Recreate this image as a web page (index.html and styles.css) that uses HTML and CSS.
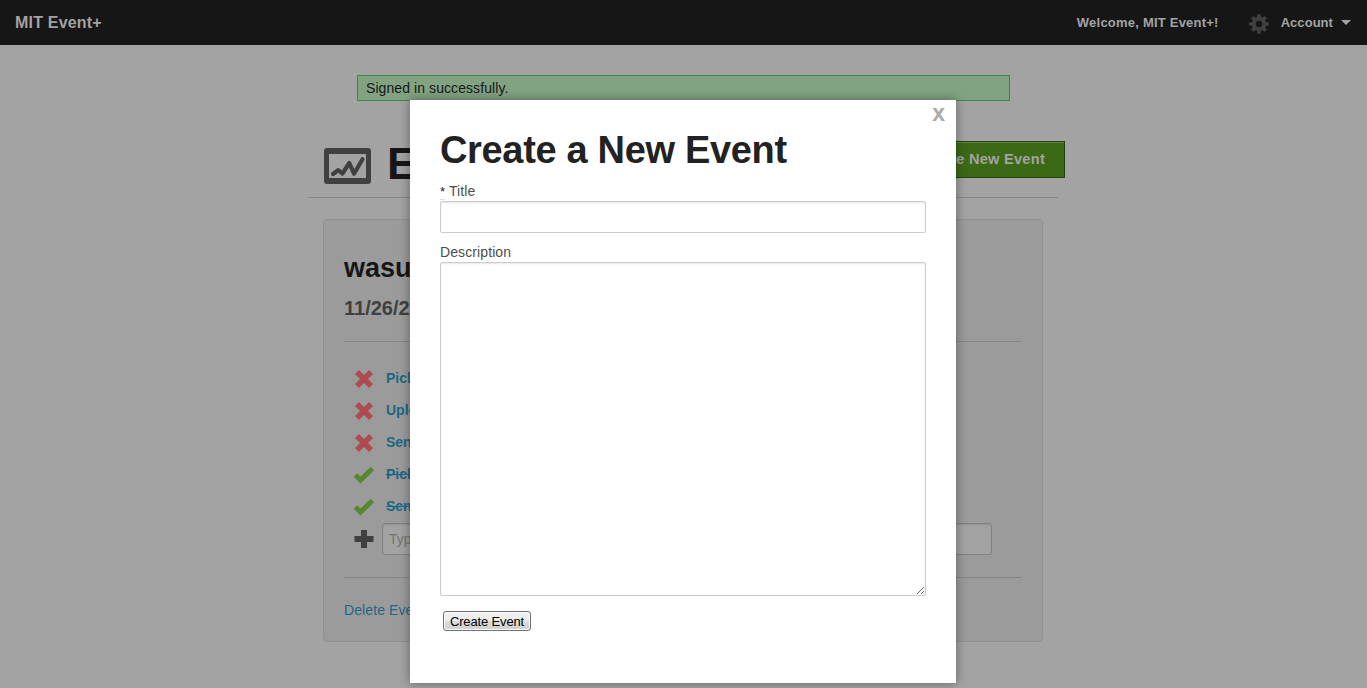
FILE: index.html
```
<!DOCTYPE html>
<html lang="en">
<head>
<meta charset="utf-8">
<title>MIT Event+</title>
<link rel="stylesheet" href="styles.css">
</head>
<body>
<nav class="topbar">
  <a class="brand">MIT Event+</a>
  <span class="welcome">Welcome, MIT Event+!</span>
  <svg class="gear" viewBox="-10 -10 20 20" width="20" height="20">
    <circle r="5.2" fill="none" stroke="#404040" stroke-width="4"/>
    <g stroke="#404040" stroke-width="3.6">
      <path d="M0-9.8V-6M0 9.8V6M-9.8 0H-6M9.8 0H6"/>
      <path d="M-6.7-6.7L-4-4M6.7 6.7L4 4M-6.7 6.7L-4 4M6.7-6.7L4-4"/>
    </g>
  </svg>
  <a class="account">Account</a>
  <i class="caret"></i>
</nav>
<main class="page">
  <div class="notice">Signed in successfully.</div>
  <header class="heading">
    <svg class="chart" viewBox="0 0 47 36" width="47" height="36">
      <path fill="#404040" fill-rule="evenodd" d="M3 0H44Q47 0 47 3V33Q47 36 44 36H3Q0 36 0 33V3Q0 0 3 0ZM5 6V30H42V6Z"/>
      <path d="M9 26L14.2 22.2L18.5 25.5L25.3 15L30 25.7L38.5 11.3" fill="none" stroke="#404040" stroke-width="4.2" stroke-linecap="round" stroke-linejoin="round"/>
    </svg>
    <h1>Events</h1>
    <a class="new-event">Create New Event</a>
  </header>
  <section class="panel">
    <h2>wasup</h2>
    <h3>11/26/2012</h3>
    <ul class="tasks">
      <li><svg class="mark" viewBox="0 0 20 20"><path d="M3 3L17 17M17 3L3 17" stroke="#af4b4f" stroke-width="5.6"/></svg><a>Pick a</a></li>
      <li><svg class="mark" viewBox="0 0 20 20"><path d="M3 3L17 17M17 3L3 17" stroke="#af4b4f" stroke-width="5.6"/></svg><a>Upload</a></li>
      <li><svg class="mark" viewBox="0 0 20 20"><path d="M3 3L17 17M17 3L3 17" stroke="#af4b4f" stroke-width="5.6"/></svg><a>Send</a></li>
      <li><svg class="mark" viewBox="0 0 20 20"><path d="M1.5 10L6.5 15L18.5 3.5" fill="none" stroke="#56882f" stroke-width="5"/></svg><a class="done">Pick a</a></li>
      <li><svg class="mark" viewBox="0 0 20 20"><path d="M1.5 10L6.5 15L18.5 3.5" fill="none" stroke="#56882f" stroke-width="5"/></svg><a class="done">Send</a></li>
      <li class="add"><svg class="mark" viewBox="0 0 20 20"><path d="M10 1V19M.5 10H19.5" stroke="#404040" stroke-width="6"/></svg><span class="task-input">Type</span></li>
    </ul>
    <a class="delete">Delete Event</a>
  </section>
</main>
<div class="modal">
  <a class="close">x</a>
  <h1>Create a New Event</h1>
  <label><abbr>*</abbr> Title</label>
  <input class="field" type="text">
  <label>Description</label>
  <textarea class="field area"></textarea>
  <button class="submit">Create Event</button>
</div>
</body>
</html>
```
FILE: styles.css
```
* { box-sizing: border-box; }
body {
  margin: 0;
  height: 688px;
  overflow: hidden;
  background: #a3a3a3;
  color: #161616;
  font: 14px/20px "Liberation Sans", Arial, sans-serif;
}
h1, h2, h3, ul { margin: 0; padding: 0; }
.topbar {
  display: flex;
  align-items: center;
  height: 45px;
  padding: 0 16px 0 15px;
  background: #161616;
  color: #a3a3a3;
  font-size: 13px;
  font-weight: bold;
}
.brand { margin-right: auto; font-size: 16px; letter-spacing: .2px; }
.welcome { margin-right: 30px; letter-spacing: .22px; }
.gear { margin: 3px 12px 0 0; }
.account { letter-spacing: .05px; }
.caret {
  margin-left: 8px;
  border: 5px solid transparent;
  border-top-color: #a3a3a3;
  border-bottom: 0;
}
.page { width: 750px; margin: 30px auto 0 308px; }
.notice {
  width: 653px;
  height: 26px;
  margin-left: 49px;
  padding: 2px 8px;
  background: #82a382;
  border: 1px solid #3f8546;
  letter-spacing: .08px;
}
.heading {
  display: flex;
  height: 97px;
  padding-left: 16px;
  border-bottom: 1px solid #868686;
}
.chart { margin: 47px 16px 0 0; }
.heading h1 { margin-top: 38px; font-size: 45px; line-height: 50px; }
.new-event {
  flex: none;
  width: 150px;
  height: 37px;
  margin: 40px -7px 0 auto;
  padding-right: 19px;
  background: #3b6915;
  border: 1px solid #233f0d;
  box-shadow: inset 0 1px #648051;
  color: #a3a3a3;
  font-size: 14.6px;
  font-weight: bold;
  line-height: 34px;
  text-align: right;
  letter-spacing: .25px;
}
.panel {
  width: 720px;
  height: 423px;
  margin: 21px 0 0 15px;
  padding: 31px 21px 0 20px;
  background: #9b9b9b;
  border: 1px solid #919191;
  border-radius: 4px;
}
.panel h2 { font-size: 27px; line-height: 34px; }
.panel h3 { margin-top: 10px; color: #404040; font-size: 20px; line-height: 26px; }
.tasks {
  height: 237px;
  margin-top: 20px;
  padding-top: 21px;
  border: solid #868686;
  border-width: 1px 0;
  list-style: none;
}
.tasks li {
  display: flex;
  align-items: center;
  height: 32px;
  padding-left: 10px;
  color: #1c6884;
  font-weight: bold;
}
.tasks a { margin-bottom: 2px; }
.mark { width: 20px; height: 20px; margin-right: 12px; }
.done { text-decoration: line-through; }
.add .mark { margin-right: 8px; }
.task-input {
  width: 610px;
  height: 32px;
  padding: 5px 6px;
  background: #a3a3a3;
  border: 1px solid #828282;
  border-radius: 3px;
  box-shadow: inset 0 1px 2px rgba(0, 0, 0, .1);
  color: #737373;
  font-weight: normal;
}
.delete { display: block; margin-top: 22px; color: #1c6884; letter-spacing: .1px; }
.modal {
  position: absolute;
  left: 410px;
  top: 100px;
  width: 546px;
  height: 583px;
  padding: 28px 30px 0;
  background: #fff;
  box-shadow: 0 0 10px rgba(0, 0, 0, .4);
  color: #4d4d4d;
}
.modal h1 { margin-bottom: 9px; color: #222; font-size: 38px; line-height: 44px; letter-spacing: -.33px; }
.close {
  position: absolute;
  top: 3px;
  right: 11px;
  color: #aaa;
  font-size: 23px;
  font-weight: bold;
}
.modal label { display: block; height: 20px; letter-spacing: .1px; }
.modal abbr { color: #222; font-size: 13px; border-bottom: 1px solid #ddd; }
.field {
  display: block;
  width: 486px;
  height: 32px;
  margin: 0 0 9px;
  border: 1px solid #ccc;
  border-radius: 2px;
  box-shadow: inset 0 1px 2px rgba(0, 0, 0, .1);
}
.area { height: 334px; margin-bottom: 15px; resize: both; }
.submit {
  display: block;
  width: 88px;
  height: 20px;
  margin-left: 3px;
  padding: 1px 0 0;
  border: 1px solid #707070;
  border-radius: 3px;
  background: linear-gradient(#f2f2f2, #ebebeb 50%, #ddd 50%, #cfcfcf);
  box-shadow: inset 0 0 0 1px #fbfbfb;
  color: #000;
  font: 13px/17px "Liberation Sans", Arial, sans-serif;
  letter-spacing: -.15px;
}
```
